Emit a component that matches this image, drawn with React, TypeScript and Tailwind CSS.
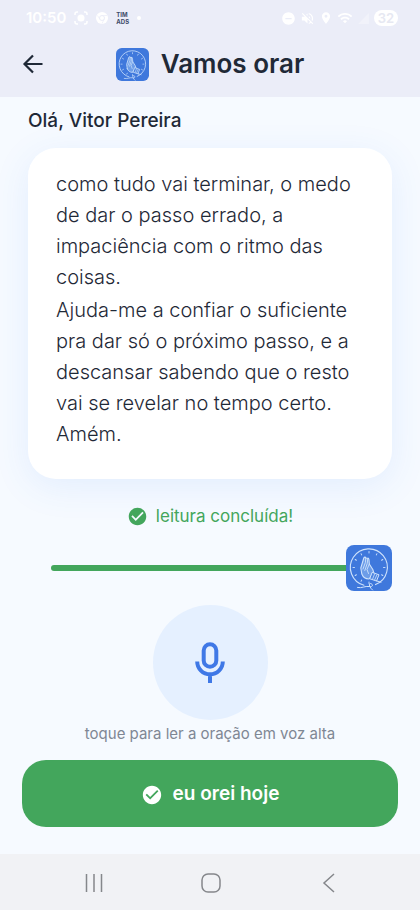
import { useState } from 'react';
import { MdCheckCircle, MdDoNotDisturbOn, MdLocationOn, MdSignalCellular4Bar, MdVolumeOff, MdWifi } from 'react-icons/md';

const PRAYER = [
  'como tudo vai terminar, o medo de dar o passo errado, a impaciência com o ritmo das coisas.',
  'Ajuda-me a confiar o suficiente pra dar só o próximo passo, e a descansar sabendo que o resto vai se revelar no tempo certo. Amém.',
];

const TICKS = [0, 30, 60, 90, 120, 150, 180, 210, 240, 270, 300, 330];

function Logo({ className }: { className?: string }) {
  return (
    <svg viewBox="0 0 46 46" className={className} fill="none" stroke="#cfe3fc" strokeLinecap="round" strokeLinejoin="round" aria-hidden="true">
      <rect width="46" height="46" rx="8" fill="#3f78dc" stroke="none" />
      <path d="M18 40.2A18.5 18.5 0 1 1 29.5 39.6" strokeWidth="1.1" />
      {TICKS.map((deg) => (
        <path key={deg} d="M23 6.5v1.5" strokeWidth="0.9" transform={`rotate(${deg} 23 22.5)`} />
      ))}
      {/* hands */}
      <path
        d="M15.8 29L14.8 23L17.8 13C18.3 11.8 19.6 11.8 19.8 13L22.4 13.2C23.2 14 23 15 23.3 19L26.8 24.5L28 28.5L23 34C19.5 34 17 32 15.8 29Z"
        fill="#6d9de8"
        strokeWidth="1.1"
      />
      <path d="M19.8 13L19.4 17.5L17 24M21.8 13.5L21.2 18.5L18.8 25.5M23.3 19L21 24.5L22.5 28.5" strokeWidth="0.9" />
      <path d="M26.5 27.5L33 29.8L30.5 36L24 33.8Z" fill="#4d84e0" strokeWidth="1" />
      <path d="M28.6 29L26.6 34M30.8 30L28.6 35" strokeWidth="0.8" />
      {/* cord under the wrists */}
      <path d="M11.5 42.5C16 43.5 19 40.8 23 41.5S27.5 39.5 24.8 38.6C22 38 23.5 42.5 26.5 45M31 36L35 37.2" strokeWidth="1" />
    </svg>
  );
}

function StatusBar() {
  return (
    <div className="flex h-9 items-center justify-between pl-[26px] pr-[22px] text-white">
      <div className="flex items-center gap-2">
        <span className="text-[15px] font-semibold leading-5">10:50</span>
        <svg viewBox="0 0 14 14" className="size-3.5" fill="none" stroke="currentColor" strokeWidth="1.5" aria-hidden="true">
          <path d="M1 4V3a2 2 0 0 1 2-2h1M10 1h1a2 2 0 0 1 2 2v1M13 10v1a2 2 0 0 1-2 2h-1M4 13H3a2 2 0 0 1-2-2v-1" />
          <circle cx="7" cy="7" r="2.8" fill="currentColor" />
        </svg>
        <svg viewBox="0 0 12 12" className="size-3" aria-hidden="true">
          <circle cx="6" cy="6" r="6" fill="currentColor" />
          <circle cx="6" cy="6" r="2.5" fill="none" stroke="#ebedf8" />
          <path d="M6 3.5h5M3.8 7.2L1.5 3.5M8.2 7.2L6 11.5" stroke="#ebedf8" strokeWidth="0.7" />
        </svg>
        <span className="text-[6px] font-bold leading-[7px] text-[#3c4a68]">
          TIM<br />ADS
        </span>
        <span className="size-1 rounded-full bg-white" />
      </div>
      <div className="flex items-center gap-1">
        <MdDoNotDisturbOn size={15} />
        <MdVolumeOff size={15} />
        <MdLocationOn size={14} />
        <MdWifi size={16} />
        <MdSignalCellular4Bar size={13} className="opacity-30" />
        <span className="rounded-full bg-white px-1 text-[13px] font-semibold leading-4 text-[#e6e8f2]">32</span>
      </div>
    </div>
  );
}

export default function App() {
  const [progress, setProgress] = useState(100);

  return (
    <div className="flex min-h-screen flex-col bg-[#f6faff] font-['Inter',sans-serif] text-[#1f2937]">
      <header className="bg-[#ebedf8] pb-[13px]">
        <StatusBar />
        <div className="grid grid-cols-[1fr_auto_1fr] items-center px-5 pt-2">
          <button type="button" aria-label="Voltar" className="flex size-10 items-center">
            <svg viewBox="0 0 26 26" className="size-[26px]" fill="none" stroke="currentColor" strokeWidth="2.2" aria-hidden="true">
              <path d="M22.5 13H4.5M13 4.5L4.5 13L13 21.5" />
            </svg>
          </button>
          <div className="flex items-center gap-3">
            <Logo className="size-[33px]" />
            <h1 className="text-[26px] font-semibold leading-10">Vamos orar</h1>
          </div>
        </div>
      </header>

      <main className="flex grow flex-col px-7 pt-2.5">
        <p className="text-[19px] font-medium leading-7">Olá, Vitor Pereira</p>

        <section className="mt-[13px] space-y-0.5 rounded-[28px] bg-white pb-[29px] pl-7 pr-6 pt-[21px] text-[20px] font-light leading-[31px] shadow-[0_8px_36px_rgba(59,130,246,0.1)]">
          {PRAYER.map((text) => (
            <p key={text}>{text}</p>
          ))}
        </section>

        <p className="mt-[25px] flex items-center justify-center gap-2 text-[17px] leading-6 text-[#43a65c]">
          <MdCheckCircle size={21} /> leitura concluída!
        </p>

        <div className="relative mt-[17px] flex h-[46px] items-center pl-[23px]">
          <div className="h-1.5 grow rounded-l-full bg-[#43a65c]" />
          <Logo className="size-[46px] shrink-0" />
          <input
            type="range"
            aria-label="Progresso da leitura"
            value={progress}
            onChange={(e) => setProgress(Number(e.target.value))}
            className="absolute inset-0 w-full cursor-pointer opacity-0"
          />
        </div>

        <div className="mt-3.5 flex flex-col items-center">
          <button type="button" aria-label="Ler em voz alta" className="flex size-[115px] items-center justify-center rounded-full bg-[#e5f0ff]">
            <svg viewBox="0 0 30 41" className="h-[41px] w-[30px]" fill="none" stroke="#3f78e6" strokeWidth="4.4" aria-hidden="true">
              <rect x="8.7" y="2.2" width="12.6" height="22.6" rx="6.3" strokeWidth="4" />
              <path d="M2.2 19.5a12.8 12.8 0 0 0 25.6 0M15 32v9" strokeWidth="4" />
            </svg>
          </button>
          <p className="mt-0.5 text-[15px] leading-6 text-[#7f8794]">toque para ler a oração em voz alta</p>
        </div>

        <button
          type="button"
          className="-mx-1.5 mt-3.5 flex h-[67px] items-center justify-center gap-2.5 rounded-3xl bg-[#43a65c] pt-0.5 text-[19px] font-semibold text-white"
        >
          <MdCheckCircle size={22} /> eu orei hoje
        </button>
      </main>

      <nav className="grid h-14 grid-cols-3 items-center bg-[#f1f2f5] pl-9 pr-[34px] pt-0.5 text-[#85878b]">
        <button type="button" aria-label="Recentes" className="flex justify-center">
          <svg viewBox="0 0 20 20" className="size-5" fill="none" stroke="currentColor" strokeWidth="1.5" aria-hidden="true">
            <path d="M2.5 1v18M10 1v18M17.5 1v18" />
          </svg>
        </button>
        <button type="button" aria-label="Início" className="flex justify-center">
          <svg viewBox="0 0 20 20" className="size-5" fill="none" stroke="currentColor" strokeWidth="1.5" aria-hidden="true">
            <rect x="1" y="1" width="18" height="18" rx="6" />
          </svg>
        </button>
        <button type="button" aria-label="Voltar ao app anterior" className="flex justify-center">
          <svg viewBox="0 0 20 20" className="size-5" fill="none" stroke="currentColor" strokeWidth="1.5" aria-hidden="true">
            <path d="M16 1L6 10l10 9" />
          </svg>
        </button>
      </nav>
    </div>
  );
}
